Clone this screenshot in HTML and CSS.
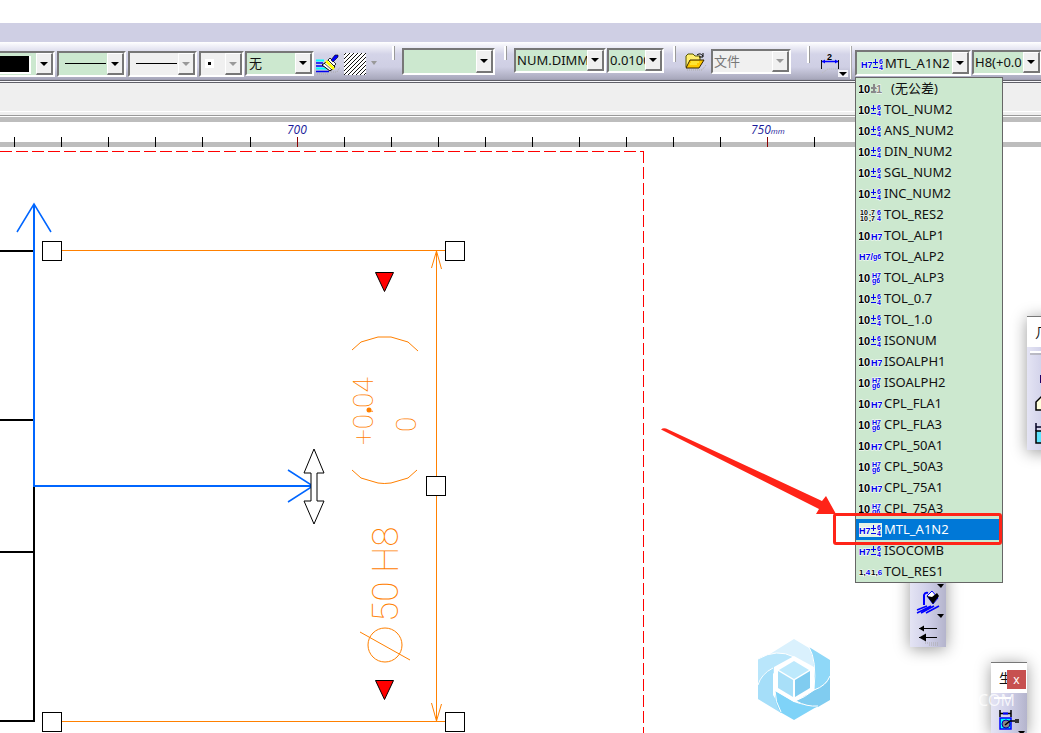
FILE: index.html
```
<!DOCTYPE html>
<html lang="zh-CN">
<head>
<meta charset="utf-8">
<title>Drafting</title>
<link rel="stylesheet" href="styles.css">
</head>
<body>
<svg class="defs" aria-hidden="true">
  <symbol id="pm" viewBox="0 0 23 14"><text class="k" x="-1" y="11">10</text><path class="b" d="M12 5.500h5M14.500 2v6M12 10.500h5"/><text class="s" x="18" y="7">6</text><text class="s" x="18" y="13">4</text></symbol>
  <symbol id="none" viewBox="0 0 23 14"><text class="k" x="-1" y="11">10</text><path class="g" d="M12 6h6M15 2v7M12 10h6"/><text class="k gray" x="17" y="11">1</text></symbol>
  <symbol id="h7" viewBox="0 0 23 14"><text class="k" x="-1" y="11">10</text><text class="h" x="12" y="11">H7</text></symbol>
  <symbol id="hg" viewBox="0 0 23 14"><text class="k" x="-1" y="11">10</text><text class="s" x="13" y="7">H7</text><text class="s" x="13" y="12">g6</text></symbol>
  <symbol id="hslash" viewBox="0 0 23 14"><text class="h" x="0" y="10">H7/</text><text class="s" x="14" y="9">g6</text></symbol>
  <symbol id="res2" viewBox="0 0 23 14"><text class="s dark" x="1" y="7">10</text><text class="s dark" x="1" y="13">10</text><text class="s dark" x="10" y="7">,7</text><text class="s dark" x="10" y="13">,7</text><text class="s" x="18" y="7">6</text><text class="s" x="18" y="13">4</text></symbol>
  <symbol id="hpm" viewBox="0 0 23 14"><text class="h" x="0" y="11">H7</text><path class="b" d="M12 5.500h5M14.500 2v6M12 10.500h5"/><text class="s" x="18" y="7">6</text><text class="s" x="18" y="13">4</text></symbol>
  <symbol id="res1" viewBox="0 0 23 14"><text class="m" x="0" y="10"><tspan class="dark">1,</tspan>4</text><text class="m" x="12" y="10"><tspan class="dark">1,</tspan>6</text></symbol>
</svg>

<div class="title-band"></div>
<div class="toolbar" role="toolbar" aria-label="图形属性">
  <div class="combo first"><select aria-label="颜色"><option></option></select><span class="swatch"></span><i class="arrow"></i></div>
  <div class="combo line-combo"><select aria-label="线宽"><option></option></select><span class="stroke"></span><i class="arrow"></i></div>
  <div class="combo line-combo off"><select aria-label="线型" disabled><option></option></select><span class="stroke"></span><i class="arrow"></i></div>
  <div class="combo point-combo off"><select aria-label="点符号" disabled><option></option></select><span class="point"></span><i class="arrow"></i></div>
  <div class="combo layer-combo"><select aria-label="图层"><option>无</option></select><i class="arrow"></i></div>
  <button class="tool brush" aria-label="格式刷">
    <svg width="26" height="22" viewBox="0 0 26 22"><path d="M0 6.500h8M0 14.500h12" stroke="#0ff" stroke-width="2"/><path d="M0 9h7M0 12h9M0 17.500h13" stroke="#0000f0" stroke-width="1.500"/><path d="M13 6l6 7-5 4-8-6z" fill="#fff" stroke="#000"/><path d="M8 9l8 7" stroke="#000" stroke-width=".7"/><path d="M10 7l8 8" stroke="#ff0" stroke-width="2.500"/><path d="M14 4l6 6-2 2-6-6z" fill="#fff" stroke="#000" stroke-width=".8"/><path d="M15 6l4-5h3v2l-5 5z" fill="#00f" stroke="#000" stroke-width=".6"/><path d="M1 20h12M15 18h6l3-5" fill="none" stroke="#aaa" stroke-dasharray="1 1"/></svg>
  </button>
  <button class="tool hatch" aria-label="图案">
    <svg width="22" height="22" viewBox="0 0 22 22" shape-rendering="crispEdges"><rect width="22" height="22" fill="#fff"/><path d="M0 2l2-2M0 6l6-6M0 10L10 0M0 14L14 0M0 18L18 0M0 22L22 0M4 22L22 4M8 22L22 8M12 22l10-10M16 22l6-6M20 22l2-2" stroke="#111"/></svg>
  </button>
  <button class="tool more" aria-label="更多图案"><svg width="8" height="5"><path d="M1 0h6L4 4z" fill="#999"/></svg></button>
  <span class="grip g1"></span>
  <div class="combo style-combo"><select aria-label="文字样式"><option></option></select><i class="arrow"></i></div>
  <span class="grip g2"></span>
  <div class="combo num-combo"><select aria-label="数值显示"><option>NUM.DIMM</option></select><i class="arrow"></i></div>
  <div class="combo prec-combo"><select aria-label="精度"><option>0.0100</option></select><i class="arrow"></i></div>
  <span class="grip g3"></span>
  <button class="tool folder" aria-label="打开">
    <svg width="22" height="20" viewBox="0 0 22 20"><path d="M1 15V4l2-2h5l2 2h5v4" fill="#ffef70" stroke="#550" /><path d="M1 16L5 8h14l-5 8z" fill="#ffc800" stroke="#320"/><path d="M6 10h8M5 12h7" stroke="#ff6"/><path d="M12 3c3-2 4-1 6 1M18 1v4h-4" fill="none" stroke="#000"/><path d="M2 18h15l4-5" fill="none" stroke="#aaa" stroke-dasharray="1 1"/></svg>
  </button>
  <div class="combo file-combo off"><select aria-label="文件" disabled><option>文件</option></select><i class="arrow"></i></div>
  <span class="grip g4"></span>
  <button class="tool dimension" aria-label="尺寸线">
    <svg width="30" height="26" viewBox="0 0 30 26"><path d="M1.500 16V7M18.500 16V7" stroke="#111"/><path d="M2 8.500h16" stroke="#00f" stroke-width="1.500"/><path d="M2 8.500l3-2v4zM18 8.500l-3-2v4z" fill="#00f"/><text x="7" y="7">2</text><path d="M2 20l6-4h9l4 3" fill="none" stroke="#bbb" stroke-dasharray="1 1"/><path d="M18 17h10v7H18z" fill="#f2f2f8"/><path d="M19 19h8l-4 4z"/></svg>
  </button>
  <span class="rule"></span>
  <div class="combo tol-combo">
    <svg class="ico" width="23" height="14"><use href="#hpm"/></svg>
    <select aria-label="公差说明"><option>MTL_A1N2</option></select><i class="arrow"></i>
    <ul class="menu">
      <li><button class="blank"><svg class="ico"><use href="#none"/></svg>(无公差)</button></li>
      <li><button><svg class="ico"><use href="#pm"/></svg>TOL_NUM2</button></li>
      <li><button><svg class="ico"><use href="#pm"/></svg>ANS_NUM2</button></li>
      <li><button><svg class="ico"><use href="#pm"/></svg>DIN_NUM2</button></li>
      <li><button><svg class="ico"><use href="#pm"/></svg>SGL_NUM2</button></li>
      <li><button><svg class="ico"><use href="#pm"/></svg>INC_NUM2</button></li>
      <li><button><svg class="ico"><use href="#res2"/></svg>TOL_RES2</button></li>
      <li><button><svg class="ico"><use href="#h7"/></svg>TOL_ALP1</button></li>
      <li><button><svg class="ico"><use href="#hslash"/></svg>TOL_ALP2</button></li>
      <li><button><svg class="ico"><use href="#hg"/></svg>TOL_ALP3</button></li>
      <li><button><svg class="ico"><use href="#pm"/></svg>TOL_0.7</button></li>
      <li><button><svg class="ico"><use href="#pm"/></svg>TOL_1.0</button></li>
      <li><button><svg class="ico"><use href="#pm"/></svg>ISONUM</button></li>
      <li><button><svg class="ico"><use href="#h7"/></svg>ISOALPH1</button></li>
      <li><button><svg class="ico"><use href="#hg"/></svg>ISOALPH2</button></li>
      <li><button><svg class="ico"><use href="#h7"/></svg>CPL_FLA1</button></li>
      <li><button><svg class="ico"><use href="#hg"/></svg>CPL_FLA3</button></li>
      <li><button><svg class="ico"><use href="#h7"/></svg>CPL_50A1</button></li>
      <li><button><svg class="ico"><use href="#hg"/></svg>CPL_50A3</button></li>
      <li><button><svg class="ico"><use href="#h7"/></svg>CPL_75A1</button></li>
      <li><button><svg class="ico"><use href="#hg"/></svg>CPL_75A3</button></li>
      <li class="chosen"><button><svg class="ico"><use href="#hpm"/></svg>MTL_A1N2</button><span class="mark"></span></li>
      <li><button><svg class="ico"><use href="#hpm"/></svg>ISOCOMB</button></li>
      <li><button><svg class="ico"><use href="#res1"/></svg>TOL_RES1</button></li>
    </ul>
  </div>
  <div class="combo value-combo"><select aria-label="公差值"><option>H8(+0.0</option></select><i class="arrow"></i></div>
</div>
<div class="dock"></div>
<svg class="ruler" aria-label="标尺">
  <defs><pattern id="ticks" x="14" width="47" height="30" patternUnits="userSpaceOnUse"><rect y="20" width="1" height="10" fill="#000"/></pattern></defs>
  <rect width="100%" height="5" fill="#bdbdbd"/><rect y="25" width="100%" height="5" fill="#bdbdbd"/>
  <rect width="240" height="30" fill="url(#ticks)"/><svg x="1" width="2000" height="30"><rect x="240" width="2000" height="30" fill="url(#ticks)"/></svg>
  <path d="M297.500 20v10M767.500 20v10" stroke="#8b0000"/>
  <text x="287" y="17">700</text><text x="751" y="17">750<tspan class="unit">mm</tspan></text>
</svg>
<main class="canvas">
  <svg class="drawing" aria-label="图纸">
    <g transform="translate(0 -147)" fill="none">
      <path d="M0 151.500H643.500" stroke="#f00" stroke-dasharray="12 4" shape-rendering="crispEdges"/>
      <path d="M643.500 151V733" stroke="#f00" stroke-dasharray="12 4" shape-rendering="crispEdges"/>
      <path d="M0 251h34M0 420h34M0 552h34M0 721h34M34 486v236" stroke="#000" stroke-width="2"/>
      <path d="M34 204v282h279" stroke="#0066ff" stroke-width="2"/>
      <path d="M17 232l17-28 17 28M288 470l25 16-25 16" stroke="#0066ff" stroke-width="1.500"/>
      <g stroke="#ff8000">
        <path d="M62 250.500h383M62 721.500h383M436.500 251v470"/>
        <path d="M431.500 268l5-17 5 18M431.500 703l5 18 5-17"/>
        <path d="M352 350l9-8 17-5h13l17 5 10 9M352 470l9 8 17 5q6 1 13 0l17-5 9-8"/>
        <circle cx="385" cy="645" r="17"/><path d="M360 632l50 28"/>
      </g>
      <text class="dim big" transform="translate(398 622) rotate(-90)">50 H8</text>
      <text class="dim" transform="translate(373 445) rotate(-90)">+0.04</text>
      <text class="dim" transform="translate(416 432) rotate(-90)">0</text>
      <circle cx="369" cy="410" r="2.500" fill="#ff8000"/>
      <g fill="#fff" stroke="#000" shape-rendering="crispEdges"><path d="M42.500 241.500h19v19h-19zM445.500 241.500h19v19h-19zM426.500 476.500h19v19h-19zM42.500 712.500h19v19h-19zM445.500 712.500h19v19h-19z"/></g>
      <path d="M314 449l10 24h-7v28h7l-10 23-10-23h7v-28h-7z" fill="#fff" stroke="#000"/>
      <path d="M375.500 272.500h18l-9 19zM375.500 680.500h18l-9 19z" fill="#f00" stroke="#000"/>
      <g>
        <path d="M759 661l35-22 15 9q13 9 13 31l-27-19h-2q-13-10-34 1z" fill="#daf1fd"/>
        <path d="M758 659q19-11 36-2l-20 14v2q-14 9-16 27z" fill="#b9e6fb"/>
        <path d="M758 683q3-10 15-15v27l8 13v5l-23-14z" fill="#a5def9"/>
        <path d="M775 691l19 11q13 5 24 4l-24 14-14-8q-6-10-5-21z" fill="#7fd3f8"/>
        <path d="M796 701l27-16q6-3 7-11v26l-12 7q-11 1-22-6z" fill="#80ccf0"/>
        <path d="M809 647l21 13v16q-3 9-16 14v-20q0-13-5-23z" fill="#8fd8f8"/>
        <path d="M794 656l20 11v23l-20 12-20-12v-23z" fill="#fff"/>
        <path d="M794 661l15 9-15 9-15-9z" fill="#bde9fc"/><path d="M778 671l15 9v17l-15-9z" fill="#a8dff8"/><path d="M795 680l15-9v17l-15 9z" fill="#80ccf0"/>
        <path d="M758 685q3-11 15-17M758 659q19-11 36-2M809 647q8 13 5 43M795 701q9-3 19-11 12-4 16-14M775 690q0 12 6 22M796 701q11 6 22 5" stroke="#fff"/>
      </g>
      <path d="M661 429.500q2-2 5-1L822 501l4-5 10 18h-20l3-5z" fill="#ff2418"/>
    </g>
  </svg>

  <section class="palette right" aria-label="几何">
    <header>几</header>
    <div class="palette-body"><svg width="36" height="103" viewBox="0 0 36 103"><path d="M3 5h33" stroke="#fff" stroke-width="2"/><path d="M3 7h33" stroke="#999"/><path d="M13 28h9v8h-9z" fill="#206"/><path d="M9 63V55l7-7h9v15z" fill="#ffd" stroke="#000" stroke-width="1.500"/><path d="M9 76v8M9 80h16" stroke="#002" stroke-width="1.500"/><path d="M9 84h18v12H9z" fill="#5de4ff" stroke="#000" stroke-width="1.500"/></svg></div>
  </section>
  <section class="palette middle" aria-label="修饰">
    <button class="tool" aria-label="填充"><svg width="36" height="77" viewBox="0 0 36 77"><path d="M27 14h7l-3 4zM27 44h7l-3 4z"/><path d="M14 35V25q1-3 4-2" stroke="#00f" stroke-width="2" fill="none"/><path d="M17 26l5-5 6 7-5 6z" fill="#fff" stroke="#00f"/><path d="M17 26l5 1 5-4 2 3-6 8z"/><path d="M7 40l10-4M7 43l14-7M11 43l13-7M16 43l13-7" stroke="#00f" stroke-width="1.500"/><path d="M9 58.500h18M9 67.500h18" stroke="#000"/><path d="M9 58.500l5-3v6zM9 67.500l7-4v8z"/><path d="M15 73h14M19 75h10" stroke="#aaa" stroke-dasharray="1 1"/></svg></button>
  </section>
  <section class="palette bottom" aria-label="生成">
    <header>生<button class="close" aria-label="关闭">x</button></header>
    <div class="palette-body"><svg width="36" height="40" viewBox="0 0 36 40"><path d="M3 5h17" stroke="#fff" stroke-width="2"/><path d="M9 17v7M20 17v7M9 20.500h11" stroke="#000" stroke-width="1.500"/><path d="M12 20.500h5" stroke="#00f" stroke-width="2"/><path d="M9 25h11v11H9z" fill="#0ff" stroke="#00f" stroke-width="1.500"/><circle cx="15" cy="31" r="4" fill="#888" stroke="#00a"/><path d="M14 32l5-4h8" stroke="#000" stroke-width="1.500" fill="none"/><path d="M24 26h4v4h-4z" fill="#333"/><path d="M27 38h7l-3 4z"/></svg></div>
  </section>
  <span class="wm">COM</span>
</main>
</body>
</html>
```

FILE: styles.css
```
* { box-sizing: border-box; }
body {
  margin: 0;
  height: 100vh;
  display: flex;
  flex-direction: column;
  overflow: hidden;
  background: #fff;
  color: #111;
  font: 13px/21px "Noto Sans", "Noto Sans CJK SC", sans-serif;
}
.defs { position: absolute; width: 0; height: 0; }
button, select { font: inherit; color: inherit; }
.title-band { flex: none; height: 19px; margin-top: 23px; background: #cfcfe4; }

.toolbar {
  flex: none;
  display: flex;
  align-items: flex-start;
  height: 41px;
  padding-top: 4px;
  border-bottom: 3px double #606068;
  background: linear-gradient(#fff 0, #f4f4fa 3px, #d4d4e8 12px, #cfcfe4 25px, #a8a8bc 37px, #9999ab);
  position: relative;
  z-index: 2;
}
.combo {
  flex: none;
  display: flex;
  position: relative;
  height: 26px;
  margin-top: 5px;
  border: 2px solid;
  border-color: #777 #fff #fff #777;
  background: #cce8cf;
}
.combo select {
  appearance: none;
  flex: 1;
  min-width: 0;
  padding: 0 0 0 3px;
  border: 0;
  border-radius: 0;
  background: transparent;
  line-height: 20px;
  overflow: hidden;
  opacity: 1;
  text-overflow: clip;
}
.arrow {
  flex: none;
  display: flex;
  width: 17px;
  align-items: center;
  justify-content: center;
  background: #f0f0f0;
  border: 1px solid;
  border-color: #fff #777 #777 #fff;
  border-right-width: 2px;
  border-bottom-width: 2px;
  pointer-events: none;
}
.arrow::after { content: ""; border: 4px solid transparent; border-top-color: #000; border-bottom: 0; }
.off { background: #f0f0f0; }
.off select { color: #777; }
.off .arrow::after { border-top-color: #999; }
.first { width: 55px; border-left: 0; }
.swatch { position: absolute; left: 0; top: 3px; width: 31px; height: 18px; background: #000; border: solid #fff; border-width: 0 2px 2px 0; }
.line-combo { width: 69px; margin-left: 2px; }
.stroke { position: absolute; left: 6px; top: 10px; width: 41px; height: 1px; background: #000; }
.point-combo { width: 45px; margin-left: 2px; }
.point { position: absolute; left: 4px; top: 6px; width: 9px; height: 9px; background: #000; border: 3px solid #fff; }
.layer-combo { width: 69px; margin-left: 1px; height: 25px; }
.layer-combo select { padding: 0 0 3px 2px; }

.tool { flex: none; display: block; padding: 0; border: 0; background: none; }
.tool svg { display: block; }
.brush { margin: 8px 0 0 2px; }
.hatch { margin: 7px 0 0 2px; }
.more { margin: 15px 0 0 4px; }
.grip { flex: none; width: 3px; height: 14px; border-left: 2px solid #fff; border-right: 1px solid #999; }
.g1 { margin-left: 14px; }
.style-combo { width: 93px; height: 27px; margin: 2px 0 0 7px; }
.g2 { margin-left: 9px; }
.num-combo { width: 92px; height: 25px; margin: 2px 0 0 7px; }
.prec-combo { width: 57px; height: 25px; margin: 2px 0 0 1px; }
.num-combo select, .prec-combo select { padding: 0 0 2px 1px; }
.g3 { margin-left: 9px; height: 16px; }
.folder { margin: 6px 0 0 9px; }
.file-combo { width: 80px; height: 25px; margin: 3px 0 0 4px; }
.file-combo select { padding: 0 0 2px 1px; }
.g4 { margin-left: 16px; height: 17px; }
.dimension { margin: 7px 0 0 10px; }
.dimension text { font: bold 9px/9px "Liberation Sans", sans-serif; }
.rule { flex: none; width: 2px; height: 33px; margin-right: 3px; background: #fff; border-right: 1px solid #aaa; }
.tol-combo { width: 116px; margin-top: 4px; }
.tol-combo > .ico { margin: 5px 0 0 4px; }
.tol-combo select { padding-left: 1px; }
.value-combo { width: 70px; height: 25px; margin: 4px 0 0 1px; }
.value-combo select { padding: 0 0 2px 1px; }

.menu {
  position: absolute;
  left: -2px;
  top: 25px;
  width: 148px;
  margin: 0;
  padding: 0;
  list-style: none;
  border: 1px solid #666;
  background: #cce8cf;
}
.menu li { position: relative; height: 21px; }
.menu button {
  display: flex;
  align-items: center;
  gap: 2px;
  width: 100%;
  height: 21px;
  padding: 0 0 0 3px;
  border: 0;
  background: none;
  text-align: left;
  white-space: nowrap;
}
.menu .blank { gap: 9px; }
.menu .chosen button { background: #0078d7; color: #fff; }
.chosen .ico { background: #e4f2e6; }
.mark { position: absolute; left: -23px; top: -6px; right: 0; height: 32px; border: 3px solid #ff2418; border-radius: 3px; z-index: 1; }
.ico { flex: none; width: 23px; height: 14px; }
symbol text { paint-order: stroke; stroke: #fff; stroke-width: 1px; fill: #00e; font-family: "Liberation Sans", sans-serif; font-weight: bold; }
symbol .k { fill: #000; font-size: 11px; }
symbol .gray { fill: #888; }
symbol .h { font-size: 9px; }
symbol .m { font-size: 8px; }
symbol .s { font-size: 7px; }
symbol .dark { fill: #000; }
symbol .b { stroke: #00e; stroke-width: 1px; }
symbol .g { stroke: #888; stroke-width: 2px; }

.dock { flex: none; height: 34px; background: #efefef; box-shadow: inset 0 -1px #fff, inset 0 -2px #999, inset 0 -5px #efefef, inset 0 -6px #fff; }
.ruler { flex: none; display: block; width: 100%; height: 30px; }
.ruler text { fill: #1a1a9a; font: italic 12px "Open Sans", sans-serif; }
.ruler .unit { font-size: 8px; }

.canvas { position: relative; flex: 1; min-height: 0; overflow: hidden; }
.drawing { position: absolute; left: 0; top: 0; width: 100%; height: 100%; }
.dim { fill: #ff8000; font: 100 28px Roboto, sans-serif; }
.big { font-size: 37px; }

.palette { position: absolute; width: 36px; background: linear-gradient(90deg, #e4e4f4, #cfcfe8 50%, #b4b4cc); box-shadow: 0 2px 16px #0006; }
.palette header { display: flex; height: 31px; align-items: center; border-top: 1px solid #777; background: #fff; }
.palette svg { display: block; }
.right { left: 1027px; top: 169px; }
.right header { padding-left: 8px; }
.middle { left: 910px; top: 423px; }
.bottom { left: 991px; top: 515px; }
.bottom header { padding-left: 8px; }
.close { flex: none; width: 19px; height: 19px; margin: 3px 0 0 -5px; padding: 0; border: 0; background: #c75050; color: #fff; font-size: 12px; line-height: 17px; }
.wm { position: absolute; left: 978px; top: 543px; color: #fffc; font: 16px/20px "Open Sans", sans-serif; }
```
